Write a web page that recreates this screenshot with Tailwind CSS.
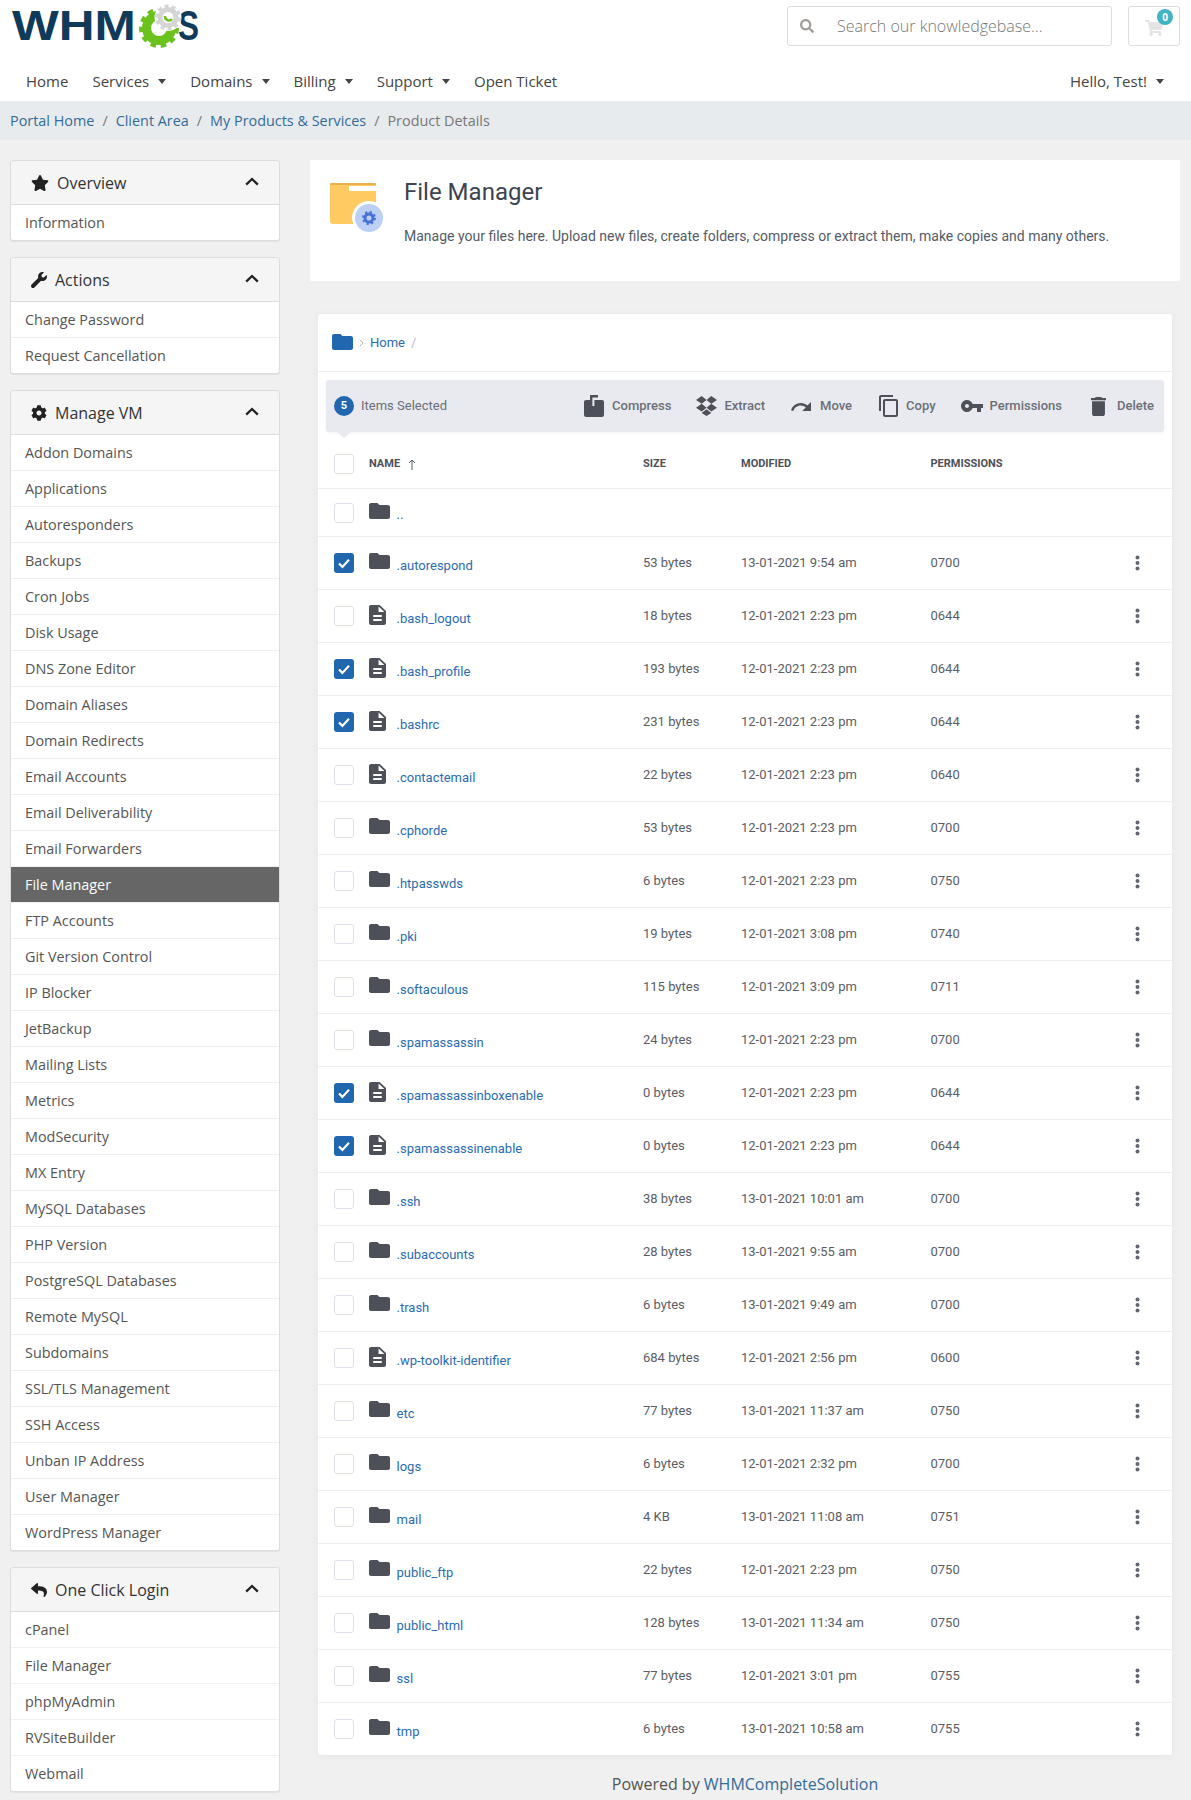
<!DOCTYPE html>
<html lang="en">

<head>
  <meta charset="UTF-8">
  <title>File Manager</title>
  <script src="https://cdn.jsdelivr.net/npm/@tailwindcss/browser@4"></script>
</head>

<body class="bg-[#f0f0f0] font-['Open_Sans',sans-serif] text-[#555]">
  <!-- Shared icons -->
  <svg class="hidden">
    <defs>
      <symbol id="fo" viewBox="2 4 20 16" preserveAspectRatio="none"><path d="M10 4H4c-1.1 0-2 .9-2 2v12c0 1.1.9 2 2 2h16c1.1 0 2-.9 2-2V8c0-1.1-.9-2-2-2h-8l-2-2z"/></symbol>
      <symbol id="fi" viewBox="4 2 16 20" preserveAspectRatio="none"><path d="M14 2H6c-1.1 0-1.99.9-1.99 2L4 20c0 1.1.89 2 1.99 2H18c1.1 0 2-.9 2-2V8l-6-6zm2 16H8v-2h8v2zm0-4H8v-2h8v2zm-3-5V3.5L18.5 9H13z"/></symbol>
      <symbol id="ck" viewBox="0 0 20 20"><path d="M5 10.5l3.4 3.4L15 6.8" fill="none" stroke="#fff" stroke-width="2.2"/></symbol>
      <symbol id="dots" viewBox="0 0 5 16"><circle cx="2.5" cy="2.5" r="2"/><circle cx="2.5" cy="8" r="2"/><circle cx="2.5" cy="13.5" r="2"/></symbol>
      <symbol id="up" viewBox="0 0 14 9"><path d="M1.2 7.6L7 2l5.8 5.6" fill="none" stroke="#222" stroke-width="2.3"/></symbol>
    </defs>
  </svg>

  <!-- Header -->
  <header class="bg-white h-[101px]">
    <div class="flex items-start h-[63px]">
      <!-- Logo -->
      <div class="relative w-[200px] h-[50px] ml-[12px]">
        <div class="relative h-[50px] pt-[1px] font-['Liberation_Sans',sans-serif] font-bold text-[42px] leading-[50px] text-[#0f3a5a]">
          <span class="inline-block origin-left scale-x-[1.18]">WHM</span><span class="absolute left-[166px] inline-block origin-left scale-x-[0.75]">S</span>
        </div>
        <svg class="absolute left-[122px] top-0 w-[66px] h-[50px]" viewBox="0 0 66 50">
          <circle cx="25" cy="28" r="12.5" fill="none" stroke="#6cc21c" stroke-width="9"/>
          <circle cx="25" cy="28" r="18" fill="none" stroke="#6cc21c" stroke-width="4" stroke-dasharray="5.5 4.9"/>
          <circle cx="34" cy="17.5" r="13.5" fill="#fff"/>
          <circle cx="34" cy="17.5" r="8" fill="none" stroke="#d5d5d5" stroke-width="5"/>
          <circle cx="34" cy="17.5" r="11.5" fill="none" stroke="#d5d5d5" stroke-width="3" stroke-dasharray="4 3.2"/>
          <path d="M31 16a4 4 0 0 0 7 3" fill="none" stroke="#6cc21c" stroke-width="2.4"/>
        </svg>
      </div>
      <!-- Search and cart -->
      <div class="ml-auto flex mt-[6px] mr-[11px]">
        <div class="flex items-center w-[325px] h-[40px] border border-[#ddd] rounded-[3px] bg-white">
          <svg class="w-[14px] h-[14px] ml-[12px] fill-[#a29d99]" viewBox="0 0 512 512"><path d="M505 442.7L405.3 343c-4.5-4.5-10.6-7-17-7H372c27.6-35.3 44-79.7 44-128C416 93.1 322.9 0 208 0S0 93.1 0 208s93.1 208 208 208c48.3 0 92.7-16.4 128-44v16.3c0 6.4 2.5 12.5 7 17l99.7 99.7c9.4 9.4 24.6 9.4 33.9 0l28.3-28.3c9.4-9.4 9.4-24.6.1-34zM208 336c-70.7 0-128-57.2-128-128 0-70.7 57.2-128 128-128 70.7 0 128 57.2 128 128 0 70.7-57.2 128-128 128z"/></svg>
          <span class="ml-[23px] text-[16px] font-light text-[#777]">Search our knowledgebase...</span>
        </div>
        <div class="relative w-[52px] h-[40px] ml-[16px] border border-[#ddd] rounded-[3px] bg-white">
          <svg class="absolute left-[16px] top-[13px] w-[18px] h-[16px] fill-[#e4e4e4]" viewBox="0 0 576 512"><path d="M528.12 301.319l47.273-208C578.806 78.301 567.391 64 551.99 64H159.208l-9.166-44.81C147.758 8.021 137.93 0 126.529 0H24C10.745 0 0 10.745 0 24v16c0 13.255 10.745 24 24 24h69.883l70.248 343.435C147.325 417.1 136 435.222 136 456c0 30.928 25.072 56 56 56s56-25.072 56-56c0-15.674-6.447-29.835-16.824-40h209.647C430.447 426.165 424 440.326 424 456c0 30.928 25.072 56 56 56s56-25.072 56-56c0-22.172-12.888-41.332-31.579-50.405l5.517-24.276c3.413-15.018-8.002-29.319-23.403-29.319H218.117l-6.545-32h293.145c11.206 0 20.92-7.754 23.403-18.681z"/></svg>
          <span class="absolute right-[6px] top-[2px] w-4 h-4 rounded-full bg-[#42b3c4] text-white text-[10px] font-bold leading-4 text-center">0</span>
        </div>
      </div>
    </div>
    <!-- Nav -->
    <nav class="flex items-center h-[38px] pb-[2px] pl-[26px] pr-[27px] text-[15px] text-[#444]">
      <span class="mr-6">Home</span>
      <span>Services</span><i class="ml-[9px] mr-6 border-x-[4.5px] border-t-[5px] border-x-transparent border-t-[#444]"></i>
      <span>Domains</span><i class="ml-[9px] mr-6 border-x-[4.5px] border-t-[5px] border-x-transparent border-t-[#444]"></i>
      <span>Billing</span><i class="ml-[9px] mr-6 border-x-[4.5px] border-t-[5px] border-x-transparent border-t-[#444]"></i>
      <span>Support</span><i class="ml-[9px] mr-6 border-x-[4.5px] border-t-[5px] border-x-transparent border-t-[#444]"></i>
      <span>Open Ticket</span>
      <span class="ml-auto">Hello, Test!</span><i class="ml-[9px] border-x-[4.5px] border-t-[5px] border-x-transparent border-t-[#444]"></i>
    </nav>
  </header>

  <!-- Breadcrumb -->
  <div class="flex items-center gap-[8px] h-[39px] pl-[10px] bg-[#e8ebee] text-[14.4px] text-[#777]">
    <span class="text-[#336b99]">Portal Home</span><span>/</span>
    <span class="text-[#336b99]">Client Area</span><span>/</span>
    <span class="text-[#336b99]">My Products &amp; Services</span><span>/</span>
    <span>Product Details</span>
  </div>

  <div class="flex items-start gap-[30px] pt-[20px] pl-[10px] pr-[11px]">
    <!-- Sidebar -->
    <aside class="w-[270px] shrink-0 flex flex-col gap-[16px] text-[14.4px]">
      <div class="bg-white border-x border-b border-[#ddd] rounded-[3px] shadow-[0_1px_1px_#00000010]">
        <div class="flex items-center h-[45px] pl-[20px] pr-[20px] bg-[#f5f5f5] border-y border-[#ddd] rounded-t-[3px] text-[16px] text-[#333]">
          <svg class="w-[18px] h-[16px] mr-[8px] fill-[#222]" viewBox="0 0 576 512"><path d="M259.3 17.8L194 150.2 47.9 171.5c-26.2 3.8-36.7 36.1-17.7 54.6l105.7 103-25 145.5c-4.5 26.3 23.2 46 46.4 33.7L288 439.6l130.7 68.7c23.2 12.2 50.9-7.4 46.4-33.7l-25-145.5 105.7-103c19-18.5 8.5-50.8-17.7-54.6L382 150.2 316.7 17.8c-11.7-23.6-45.6-23.9-57.4 0z"/></svg>
          <span>Overview</span>
          <svg class="ml-auto w-[14px] h-[9px] mb-[2px]"><use href="#up"/></svg>
        </div>
        <div class="flex items-center h-[35px] pl-[14px]">Information</div>
      </div>

      <div class="bg-white border-x border-b border-[#ddd] rounded-[3px] shadow-[0_1px_1px_#00000010]">
        <div class="flex items-center h-[45px] pl-[20px] pr-[20px] bg-[#f5f5f5] border-y border-[#ddd] rounded-t-[3px] text-[16px] text-[#333]">
          <svg class="w-[16px] h-[16px] mr-[8px] fill-[#222]" viewBox="0 0 512 512"><path d="M507.73 109.1c-2.24-9.03-13.54-12.09-20.12-5.51l-74.36 74.36-67.88-11.31-11.31-67.88 74.36-74.36c6.62-6.62 3.43-17.9-5.66-20.16-47.38-11.74-99.55.91-136.58 37.93-39.64 39.64-50.55 97.1-34.05 147.2L18.74 402.76c-24.99 24.99-24.99 65.51 0 90.5 24.99 24.99 65.51 24.99 90.5 0l213.21-213.21c50.12 16.71 107.47 5.68 147.37-34.22 37.07-37.07 49.7-89.32 37.91-136.73z"/></svg>
          <span>Actions</span>
          <svg class="ml-auto w-[14px] h-[9px] mb-[2px]"><use href="#up"/></svg>
        </div>
        <div class="flex items-center h-[36px] pl-[14px] border-b border-[#f0f0f0]">Change Password</div>
        <div class="flex items-center h-[35px] pl-[14px]">Request Cancellation</div>
      </div>

      <div class="bg-white border-x border-b border-[#ddd] rounded-[3px] shadow-[0_1px_1px_#00000010]">
        <div class="flex items-center h-[45px] pl-[20px] pr-[20px] bg-[#f5f5f5] border-y border-[#ddd] rounded-t-[3px] text-[16px] text-[#333]">
          <svg class="w-[16px] h-[16px] mr-[8px] fill-[#222]" viewBox="0 0 512 512"><path d="M487.4 315.7l-42.6-24.6c4.3-23.2 4.3-47 0-70.2l42.6-24.6c4.9-2.8 7.1-8.6 5.5-14-11.1-35.6-30-67.8-54.7-94.6-3.8-4.1-10-5.1-14.8-2.3L380.8 110c-17.9-15.4-38.5-27.3-60.8-35.1V25.8c0-5.6-3.9-10.5-9.4-11.7-36.7-8.2-74.3-7.8-109.2 0-5.5 1.2-9.4 6.1-9.4 11.7V75c-22.2 7.9-42.8 19.8-60.8 35.1L88.7 85.5c-4.9-2.8-11-1.9-14.8 2.3-24.7 26.7-43.6 58.9-54.7 94.6-1.7 5.4.6 11.2 5.5 14L67.3 221c-4.3 23.2-4.3 47 0 70.2l-42.6 24.6c-4.9 2.8-7.1 8.6-5.5 14 11.1 35.6 30 67.8 54.7 94.6 3.8 4.1 10 5.1 14.8 2.3l42.6-24.6c17.9 15.4 38.5 27.3 60.8 35.1v49.2c0 5.6 3.9 10.5 9.4 11.7 36.7 8.2 74.3 7.8 109.2 0 5.5-1.2 9.4-6.1 9.4-11.7v-49.2c22.2-7.9 42.8-19.8 60.8-35.1l42.6 24.6c4.9 2.8 11 1.9 14.8-2.3 24.7-26.7 43.6-58.9 54.7-94.6 1.5-5.5-.7-11.3-5.6-14.1zM256 336c-44.1 0-80-35.9-80-80s35.9-80 80-80 80 35.9 80 80-35.9 80-80 80z"/></svg>
          <span>Manage VM</span>
          <svg class="ml-auto w-[14px] h-[9px] mb-[2px]"><use href="#up"/></svg>
        </div>
        <div class="flex flex-col divide-y divide-[#f0f0f0] *:flex *:items-center *:h-[36px] *:last:h-[35px] *:pl-[14px]">
          <div>Addon Domains</div>
          <div>Applications</div>
          <div>Autoresponders</div>
          <div>Backups</div>
          <div>Cron Jobs</div>
          <div>Disk Usage</div>
          <div>DNS Zone Editor</div>
          <div>Domain Aliases</div>
          <div>Domain Redirects</div>
          <div>Email Accounts</div>
          <div>Email Deliverability</div>
          <div>Email Forwarders</div>
          <div class="bg-[#666] text-white">File Manager</div>
          <div>FTP Accounts</div>
          <div>Git Version Control</div>
          <div>IP Blocker</div>
          <div>JetBackup</div>
          <div>Mailing Lists</div>
          <div>Metrics</div>
          <div>ModSecurity</div>
          <div>MX Entry</div>
          <div>MySQL Databases</div>
          <div>PHP Version</div>
          <div>PostgreSQL Databases</div>
          <div>Remote MySQL</div>
          <div>Subdomains</div>
          <div>SSL/TLS Management</div>
          <div>SSH Access</div>
          <div>Unban IP Address</div>
          <div>User Manager</div>
          <div>WordPress Manager</div>
        </div>
      </div>

      <div class="bg-white border-x border-b border-[#ddd] rounded-[3px] shadow-[0_1px_1px_#00000010]">
        <div class="flex items-center h-[45px] pl-[20px] pr-[20px] bg-[#f5f5f5] border-y border-[#ddd] rounded-t-[3px] text-[16px] text-[#333]">
          <svg class="w-[16px] h-[16px] mr-[8px] fill-[#222]" viewBox="0 0 512 512"><path d="M8.309 189.836L184.313 37.851C199.719 24.546 224 35.347 224 56.015v80.053c160.629 1.839 288 34.032 288 186.258 0 61.441-39.581 122.309-83.333 154.132-13.653 9.931-33.111-2.533-28.077-18.631 45.344-145.012-21.507-183.51-176.59-185.742V360c0 20.7-24.3 31.453-39.687 18.164l-176.004-152c-11.071-9.562-11.086-26.753 0-36.328z"/></svg>
          <span>One Click Login</span>
          <svg class="ml-auto w-[14px] h-[9px] mb-[2px]"><use href="#up"/></svg>
        </div>
        <div class="flex flex-col divide-y divide-[#f0f0f0] *:flex *:items-center *:h-[36px] *:last:h-[35px] *:pl-[14px]">
          <div>cPanel</div>
          <div>File Manager</div>
          <div>phpMyAdmin</div>
          <div>RVSiteBuilder</div>
          <div>Webmail</div>
        </div>
      </div>
    </aside>

    <!-- Main -->
    <main class="flex-1 min-w-0 font-['Roboto',sans-serif]">
      <!-- Title card -->
      <div class="flex h-[121px] bg-white">
        <svg class="w-[60px] h-[60px] ml-[20px] mt-[23px] shrink-0" viewBox="0 0 60 60">
          <rect x="0" y="0" width="46" height="41" rx="3" fill="#ffca62"/>
          <rect x="0" y="0" width="46" height="2" rx="1" fill="#e6b04e"/>
          <rect x="19" y="3" width="27" height="5" fill="#fff"/>
          <circle cx="39" cy="35" r="17" fill="#fff"/>
          <circle cx="39" cy="35" r="14" fill="#bccff5"/>
          <circle cx="39" cy="35" r="4" fill="none" stroke="#4672d6" stroke-width="3"/>
          <circle cx="39" cy="35" r="6" fill="none" stroke="#4672d6" stroke-width="2" stroke-dasharray="2.2 2.5"/>
        </svg>
        <div class="ml-[14px]">
          <h1 class="mt-[17px] text-[24px] leading-[30px] text-[#3d4450]">File Manager</h1>
          <p class="mt-[19px] text-[14px] leading-5 text-[#555b66]">Manage your files here. Upload new files, create folders, compress or extract them, make copies and many others.</p>
        </div>
      </div>

      <!-- File list -->
      <div class="mt-[33px] mx-[8px] bg-white rounded-[3px] shadow-[0_1px_8px_#0000000d] text-[13px] text-[#5a5d66]">
        <div class="flex items-center h-[58px] pl-[14px] border-b border-[#eceef3]">
          <svg class="w-[21px] h-4 fill-[#2067b0] mb-[2px]"><use href="#fo"/></svg>
          <svg class="w-[5px] h-2 ml-[6px] mr-[6px]" viewBox="0 0 5 8"><path d="M.7.7l3.4 3.3L.7 7.3" fill="none" stroke="#b5b7bd"/></svg>
          <span class="text-[#2a6cb3]">Home</span>
          <span class="ml-[6px] text-[#bbb]">/</span>
        </div>

        <!-- Toolbar -->
        <div class="relative flex items-center h-[52px] mt-[8px] mx-[8px] pl-[8px] pr-[10px] bg-[#e9eaef] rounded-[3px] shadow-[0_1px_3px_#0000000d] font-medium text-[#6b6f78]">
          <span class="w-5 h-5 rounded-full bg-[#2067b0] text-white text-[11px] font-bold leading-5 text-center">5</span>
          <span class="ml-[7px] font-normal">Items Selected</span>
          <svg class="ml-auto w-5 h-[22px] mr-2 fill-[#4d5058]" viewBox="0 0 20 22"><rect y="5" width="20" height="17" rx="2"/><rect x="6" width="8" height="2.5"/><rect x="6" width="2.4" height="11"/><rect x="8.4" y="5" width="2" height="6" fill="#e9eaef"/></svg>
          <span>Compress</span>
          <svg class="ml-[25px] w-[21px] h-5 mr-[7px] fill-[#4d5058]" viewBox="1 2 22 20.5" preserveAspectRatio="none"><path d="M7 2L1 6l6 4 5-4zM17 2l-5 4 5 4 6-4zM1 14l6 4 5-4-5-4zM23 14l-6 4-5-4 5-4zM12 15.5l-5 4 5 3 5-3z"/></svg>
          <span>Extract</span>
          <svg class="ml-[26px] w-5 h-[9px] mr-[9px] fill-[#4d5058]" viewBox="1.5 7 20.5 9" preserveAspectRatio="none"><path d="M18.4 10.6C16.55 8.99 14.15 8 11.5 8c-4.65 0-8.58 3.03-9.96 7.22L3.9 16c1.05-3.19 4.05-5.5 7.6-5.5 1.95 0 3.73.72 5.12 1.88L13 16h9V7l-3.6 3.6z"/></svg>
          <span>Move</span>
          <svg class="ml-[27px] w-[19px] h-[22px] mr-2 fill-[#4d5058]" viewBox="2 1 19 22" preserveAspectRatio="none"><path d="M16 1H4c-1.1 0-2 .9-2 2v14h2V3h12V1zm3 4H8c-1.1 0-2 .9-2 2v14c0 1.1.9 2 2 2h11c1.1 0 2-.9 2-2V7c0-1.1-.9-2-2-2zm0 16H8V7h11v14z"/></svg>
          <span>Copy</span>
          <svg class="ml-[25px] w-[22px] h-[12px] mr-[7px] fill-[#4d5058]" viewBox="1 6 22 12" preserveAspectRatio="none"><path d="M12.65 10C11.83 7.67 9.61 6 7 6c-3.31 0-6 2.69-6 6s2.69 6 6 6c2.61 0 4.83-1.67 5.65-4H17v4h4v-4h2v-4H12.65zM7 14c-1.1 0-2-.9-2-2s.9-2 2-2 2 .9 2 2-.9 2-2 2z"/></svg>
          <span>Permissions</span>
          <svg class="ml-[29px] w-[15px] h-[19px] mr-[11px] fill-[#4d5058]" viewBox="5 3 14 18" preserveAspectRatio="none"><path d="M6 19c0 1.1.9 2 2 2h8c1.1 0 2-.9 2-2V7H6v12zM19 4h-3.5l-1-1h-5l-1 1H5v2h14V4z"/></svg>
          <span>Delete</span>
          <i class="absolute left-[11px] top-full border-x-[7px] border-t-[6px] border-x-transparent border-t-[#e9eaef]"></i>
        </div>

        <!-- Table head -->
        <div class="grid grid-cols-[78.5px_246.5px_98px_189.5px_1fr] items-center h-[56px] pt-[8px] text-[11px] font-bold text-[#4d5058]">
          <span class="pl-4"><span class="block w-5 h-5 rounded-[3px] border border-[#dfe1ea]"></span></span>
          <span class="flex items-center -ml-[27.5px]">NAME<svg class="w-[8px] h-[11px] ml-2" viewBox="0 0 8 11"><path d="M4 11V1M1 4l3-3 3 3" fill="none" stroke="#555b66"/></svg></span>
          <span>SIZE</span>
          <span>MODIFIED</span>
          <span>PERMISSIONS</span>
        </div>

        <!-- Rows -->
        <div class="grid grid-cols-[51px_27.5px_246.5px_98px_189.5px_1fr_37.5px] items-center h-[48px] border-t border-[#eceef3]">
          <span class="pl-4"><span class="block w-5 h-5 rounded-[3px] border border-[#dfe1ea]"></span></span>
          <svg class="w-[21px] h-4 mb-1 fill-[#4d5058]"><use href="#fo"/></svg>
          <span class="pt-[5px] text-[#2a6cb3]">..</span>
        </div>
        <div class="grid grid-cols-[51px_27.5px_246.5px_98px_189.5px_1fr_37.5px] items-center h-[53px] border-t border-[#eceef3]">
          <span class="pl-4"><svg class="block w-5 h-5 rounded-[3px] bg-[#2067b0]"><use href="#ck"/></svg></span>
          <svg class="w-[21px] h-4 mb-1 fill-[#4d5058]"><use href="#fo"/></svg>
          <span class="pt-[5px] text-[#2a6cb3]">.autorespond</span><span>53 bytes</span><span>13-01-2021 9:54 am</span><span>0700</span>
          <svg class="w-[5px] h-4 fill-[#5f6670]"><use href="#dots"/></svg>
        </div>
        <div class="grid grid-cols-[51px_27.5px_246.5px_98px_189.5px_1fr_37.5px] items-center h-[53px] border-t border-[#eceef3]">
          <span class="pl-4"><span class="block w-5 h-5 rounded-[3px] border border-[#dfe1ea]"></span></span>
          <svg class="w-[17px] h-5 mb-[3px] fill-[#4d5058]"><use href="#fi"/></svg>
          <span class="pt-[5px] text-[#2a6cb3]">.bash_logout</span><span>18 bytes</span><span>12-01-2021 2:23 pm</span><span>0644</span>
          <svg class="w-[5px] h-4 fill-[#5f6670]"><use href="#dots"/></svg>
        </div>
        <div class="grid grid-cols-[51px_27.5px_246.5px_98px_189.5px_1fr_37.5px] items-center h-[53px] border-t border-[#eceef3]">
          <span class="pl-4"><svg class="block w-5 h-5 rounded-[3px] bg-[#2067b0]"><use href="#ck"/></svg></span>
          <svg class="w-[17px] h-5 mb-[3px] fill-[#4d5058]"><use href="#fi"/></svg>
          <span class="pt-[5px] text-[#2a6cb3]">.bash_profile</span><span>193 bytes</span><span>12-01-2021 2:23 pm</span><span>0644</span>
          <svg class="w-[5px] h-4 fill-[#5f6670]"><use href="#dots"/></svg>
        </div>
        <div class="grid grid-cols-[51px_27.5px_246.5px_98px_189.5px_1fr_37.5px] items-center h-[53px] border-t border-[#eceef3]">
          <span class="pl-4"><svg class="block w-5 h-5 rounded-[3px] bg-[#2067b0]"><use href="#ck"/></svg></span>
          <svg class="w-[17px] h-5 mb-[3px] fill-[#4d5058]"><use href="#fi"/></svg>
          <span class="pt-[5px] text-[#2a6cb3]">.bashrc</span><span>231 bytes</span><span>12-01-2021 2:23 pm</span><span>0644</span>
          <svg class="w-[5px] h-4 fill-[#5f6670]"><use href="#dots"/></svg>
        </div>
        <div class="grid grid-cols-[51px_27.5px_246.5px_98px_189.5px_1fr_37.5px] items-center h-[53px] border-t border-[#eceef3]">
          <span class="pl-4"><span class="block w-5 h-5 rounded-[3px] border border-[#dfe1ea]"></span></span>
          <svg class="w-[17px] h-5 mb-[3px] fill-[#4d5058]"><use href="#fi"/></svg>
          <span class="pt-[5px] text-[#2a6cb3]">.contactemail</span><span>22 bytes</span><span>12-01-2021 2:23 pm</span><span>0640</span>
          <svg class="w-[5px] h-4 fill-[#5f6670]"><use href="#dots"/></svg>
        </div>
        <div class="grid grid-cols-[51px_27.5px_246.5px_98px_189.5px_1fr_37.5px] items-center h-[53px] border-t border-[#eceef3]">
          <span class="pl-4"><span class="block w-5 h-5 rounded-[3px] border border-[#dfe1ea]"></span></span>
          <svg class="w-[21px] h-4 mb-1 fill-[#4d5058]"><use href="#fo"/></svg>
          <span class="pt-[5px] text-[#2a6cb3]">.cphorde</span><span>53 bytes</span><span>12-01-2021 2:23 pm</span><span>0700</span>
          <svg class="w-[5px] h-4 fill-[#5f6670]"><use href="#dots"/></svg>
        </div>
        <div class="grid grid-cols-[51px_27.5px_246.5px_98px_189.5px_1fr_37.5px] items-center h-[53px] border-t border-[#eceef3]">
          <span class="pl-4"><span class="block w-5 h-5 rounded-[3px] border border-[#dfe1ea]"></span></span>
          <svg class="w-[21px] h-4 mb-1 fill-[#4d5058]"><use href="#fo"/></svg>
          <span class="pt-[5px] text-[#2a6cb3]">.htpasswds</span><span>6 bytes</span><span>12-01-2021 2:23 pm</span><span>0750</span>
          <svg class="w-[5px] h-4 fill-[#5f6670]"><use href="#dots"/></svg>
        </div>
        <div class="grid grid-cols-[51px_27.5px_246.5px_98px_189.5px_1fr_37.5px] items-center h-[53px] border-t border-[#eceef3]">
          <span class="pl-4"><span class="block w-5 h-5 rounded-[3px] border border-[#dfe1ea]"></span></span>
          <svg class="w-[21px] h-4 mb-1 fill-[#4d5058]"><use href="#fo"/></svg>
          <span class="pt-[5px] text-[#2a6cb3]">.pki</span><span>19 bytes</span><span>12-01-2021 3:08 pm</span><span>0740</span>
          <svg class="w-[5px] h-4 fill-[#5f6670]"><use href="#dots"/></svg>
        </div>
        <div class="grid grid-cols-[51px_27.5px_246.5px_98px_189.5px_1fr_37.5px] items-center h-[53px] border-t border-[#eceef3]">
          <span class="pl-4"><span class="block w-5 h-5 rounded-[3px] border border-[#dfe1ea]"></span></span>
          <svg class="w-[21px] h-4 mb-1 fill-[#4d5058]"><use href="#fo"/></svg>
          <span class="pt-[5px] text-[#2a6cb3]">.softaculous</span><span>115 bytes</span><span>12-01-2021 3:09 pm</span><span>0711</span>
          <svg class="w-[5px] h-4 fill-[#5f6670]"><use href="#dots"/></svg>
        </div>
        <div class="grid grid-cols-[51px_27.5px_246.5px_98px_189.5px_1fr_37.5px] items-center h-[53px] border-t border-[#eceef3]">
          <span class="pl-4"><span class="block w-5 h-5 rounded-[3px] border border-[#dfe1ea]"></span></span>
          <svg class="w-[21px] h-4 mb-1 fill-[#4d5058]"><use href="#fo"/></svg>
          <span class="pt-[5px] text-[#2a6cb3]">.spamassassin</span><span>24 bytes</span><span>12-01-2021 2:23 pm</span><span>0700</span>
          <svg class="w-[5px] h-4 fill-[#5f6670]"><use href="#dots"/></svg>
        </div>
        <div class="grid grid-cols-[51px_27.5px_246.5px_98px_189.5px_1fr_37.5px] items-center h-[53px] border-t border-[#eceef3]">
          <span class="pl-4"><svg class="block w-5 h-5 rounded-[3px] bg-[#2067b0]"><use href="#ck"/></svg></span>
          <svg class="w-[17px] h-5 mb-[3px] fill-[#4d5058]"><use href="#fi"/></svg>
          <span class="pt-[5px] text-[#2a6cb3]">.spamassassinboxenable</span><span>0 bytes</span><span>12-01-2021 2:23 pm</span><span>0644</span>
          <svg class="w-[5px] h-4 fill-[#5f6670]"><use href="#dots"/></svg>
        </div>
        <div class="grid grid-cols-[51px_27.5px_246.5px_98px_189.5px_1fr_37.5px] items-center h-[53px] border-t border-[#eceef3]">
          <span class="pl-4"><svg class="block w-5 h-5 rounded-[3px] bg-[#2067b0]"><use href="#ck"/></svg></span>
          <svg class="w-[17px] h-5 mb-[3px] fill-[#4d5058]"><use href="#fi"/></svg>
          <span class="pt-[5px] text-[#2a6cb3]">.spamassassinenable</span><span>0 bytes</span><span>12-01-2021 2:23 pm</span><span>0644</span>
          <svg class="w-[5px] h-4 fill-[#5f6670]"><use href="#dots"/></svg>
        </div>
        <div class="grid grid-cols-[51px_27.5px_246.5px_98px_189.5px_1fr_37.5px] items-center h-[53px] border-t border-[#eceef3]">
          <span class="pl-4"><span class="block w-5 h-5 rounded-[3px] border border-[#dfe1ea]"></span></span>
          <svg class="w-[21px] h-4 mb-1 fill-[#4d5058]"><use href="#fo"/></svg>
          <span class="pt-[5px] text-[#2a6cb3]">.ssh</span><span>38 bytes</span><span>13-01-2021 10:01 am</span><span>0700</span>
          <svg class="w-[5px] h-4 fill-[#5f6670]"><use href="#dots"/></svg>
        </div>
        <div class="grid grid-cols-[51px_27.5px_246.5px_98px_189.5px_1fr_37.5px] items-center h-[53px] border-t border-[#eceef3]">
          <span class="pl-4"><span class="block w-5 h-5 rounded-[3px] border border-[#dfe1ea]"></span></span>
          <svg class="w-[21px] h-4 mb-1 fill-[#4d5058]"><use href="#fo"/></svg>
          <span class="pt-[5px] text-[#2a6cb3]">.subaccounts</span><span>28 bytes</span><span>13-01-2021 9:55 am</span><span>0700</span>
          <svg class="w-[5px] h-4 fill-[#5f6670]"><use href="#dots"/></svg>
        </div>
        <div class="grid grid-cols-[51px_27.5px_246.5px_98px_189.5px_1fr_37.5px] items-center h-[53px] border-t border-[#eceef3]">
          <span class="pl-4"><span class="block w-5 h-5 rounded-[3px] border border-[#dfe1ea]"></span></span>
          <svg class="w-[21px] h-4 mb-1 fill-[#4d5058]"><use href="#fo"/></svg>
          <span class="pt-[5px] text-[#2a6cb3]">.trash</span><span>6 bytes</span><span>13-01-2021 9:49 am</span><span>0700</span>
          <svg class="w-[5px] h-4 fill-[#5f6670]"><use href="#dots"/></svg>
        </div>
        <div class="grid grid-cols-[51px_27.5px_246.5px_98px_189.5px_1fr_37.5px] items-center h-[53px] border-t border-[#eceef3]">
          <span class="pl-4"><span class="block w-5 h-5 rounded-[3px] border border-[#dfe1ea]"></span></span>
          <svg class="w-[17px] h-5 mb-[3px] fill-[#4d5058]"><use href="#fi"/></svg>
          <span class="pt-[5px] text-[#2a6cb3]">.wp-toolkit-identifier</span><span>684 bytes</span><span>12-01-2021 2:56 pm</span><span>0600</span>
          <svg class="w-[5px] h-4 fill-[#5f6670]"><use href="#dots"/></svg>
        </div>
        <div class="grid grid-cols-[51px_27.5px_246.5px_98px_189.5px_1fr_37.5px] items-center h-[53px] border-t border-[#eceef3]">
          <span class="pl-4"><span class="block w-5 h-5 rounded-[3px] border border-[#dfe1ea]"></span></span>
          <svg class="w-[21px] h-4 mb-1 fill-[#4d5058]"><use href="#fo"/></svg>
          <span class="pt-[5px] text-[#2a6cb3]">etc</span><span>77 bytes</span><span>13-01-2021 11:37 am</span><span>0750</span>
          <svg class="w-[5px] h-4 fill-[#5f6670]"><use href="#dots"/></svg>
        </div>
        <div class="grid grid-cols-[51px_27.5px_246.5px_98px_189.5px_1fr_37.5px] items-center h-[53px] border-t border-[#eceef3]">
          <span class="pl-4"><span class="block w-5 h-5 rounded-[3px] border border-[#dfe1ea]"></span></span>
          <svg class="w-[21px] h-4 mb-1 fill-[#4d5058]"><use href="#fo"/></svg>
          <span class="pt-[5px] text-[#2a6cb3]">logs</span><span>6 bytes</span><span>12-01-2021 2:32 pm</span><span>0700</span>
          <svg class="w-[5px] h-4 fill-[#5f6670]"><use href="#dots"/></svg>
        </div>
        <div class="grid grid-cols-[51px_27.5px_246.5px_98px_189.5px_1fr_37.5px] items-center h-[53px] border-t border-[#eceef3]">
          <span class="pl-4"><span class="block w-5 h-5 rounded-[3px] border border-[#dfe1ea]"></span></span>
          <svg class="w-[21px] h-4 mb-1 fill-[#4d5058]"><use href="#fo"/></svg>
          <span class="pt-[5px] text-[#2a6cb3]">mail</span><span>4 KB</span><span>13-01-2021 11:08 am</span><span>0751</span>
          <svg class="w-[5px] h-4 fill-[#5f6670]"><use href="#dots"/></svg>
        </div>
        <div class="grid grid-cols-[51px_27.5px_246.5px_98px_189.5px_1fr_37.5px] items-center h-[53px] border-t border-[#eceef3]">
          <span class="pl-4"><span class="block w-5 h-5 rounded-[3px] border border-[#dfe1ea]"></span></span>
          <svg class="w-[21px] h-4 mb-1 fill-[#4d5058]"><use href="#fo"/></svg>
          <span class="pt-[5px] text-[#2a6cb3]">public_ftp</span><span>22 bytes</span><span>12-01-2021 2:23 pm</span><span>0750</span>
          <svg class="w-[5px] h-4 fill-[#5f6670]"><use href="#dots"/></svg>
        </div>
        <div class="grid grid-cols-[51px_27.5px_246.5px_98px_189.5px_1fr_37.5px] items-center h-[53px] border-t border-[#eceef3]">
          <span class="pl-4"><span class="block w-5 h-5 rounded-[3px] border border-[#dfe1ea]"></span></span>
          <svg class="w-[21px] h-4 mb-1 fill-[#4d5058]"><use href="#fo"/></svg>
          <span class="pt-[5px] text-[#2a6cb3]">public_html</span><span>128 bytes</span><span>13-01-2021 11:34 am</span><span>0750</span>
          <svg class="w-[5px] h-4 fill-[#5f6670]"><use href="#dots"/></svg>
        </div>
        <div class="grid grid-cols-[51px_27.5px_246.5px_98px_189.5px_1fr_37.5px] items-center h-[53px] border-t border-[#eceef3]">
          <span class="pl-4"><span class="block w-5 h-5 rounded-[3px] border border-[#dfe1ea]"></span></span>
          <svg class="w-[21px] h-4 mb-1 fill-[#4d5058]"><use href="#fo"/></svg>
          <span class="pt-[5px] text-[#2a6cb3]">ssl</span><span>77 bytes</span><span>12-01-2021 3:01 pm</span><span>0755</span>
          <svg class="w-[5px] h-4 fill-[#5f6670]"><use href="#dots"/></svg>
        </div>
        <div class="grid grid-cols-[51px_27.5px_246.5px_98px_189.5px_1fr_37.5px] items-center h-[53px] border-t border-[#eceef3]">
          <span class="pl-4"><span class="block w-5 h-5 rounded-[3px] border border-[#dfe1ea]"></span></span>
          <svg class="w-[21px] h-4 mb-1 fill-[#4d5058]"><use href="#fo"/></svg>
          <span class="pt-[5px] text-[#2a6cb3]">tmp</span><span>6 bytes</span><span>13-01-2021 10:58 am</span><span>0755</span>
          <svg class="w-[5px] h-4 fill-[#5f6670]"><use href="#dots"/></svg>
        </div>
      </div>

      <!-- Footer -->
      <p class="mt-[17px] text-center font-['Open_Sans',sans-serif] text-[16px] leading-6 text-[#555]">Powered by <span class="text-[#336b99]">WHMCompleteSolution</span></p>
    </main>
  </div>
</body>

</html>
